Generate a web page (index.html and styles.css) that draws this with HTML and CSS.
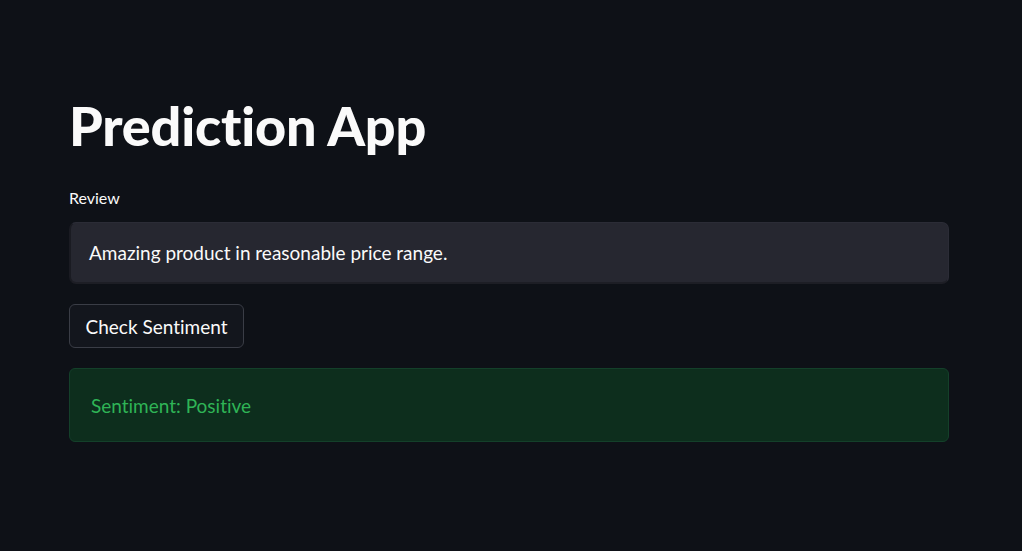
FILE: index.html
```html
<!DOCTYPE html>
<html>
<head>
<meta charset="utf-8">
<link rel="stylesheet" href="styles.css">
</head>
<body>
<main class="app">
  <h1 class="title">Prediction App</h1>
  <div class="field">
    <label class="label">Review</label>
    <div class="input">Amazing product in reasonable price range.</div>
  </div>
  <button class="btn">Check Sentiment</button>
  <div class="alert">Sentiment: Positive</div>
</main>
</body>
</html>
```
FILE: styles.css
```css
html, body {
  margin: 0;
  padding: 0;
  background: #0e1117;
  height: 100%;
}
body {
  font-family: Lato, "Noto Sans", sans-serif;
  font-variant-ligatures: none;
  color: #fafafa;
}
.app {
  width: 880px;
  padding: 94px 0 0 69px;
  display: flex;
  flex-direction: column;
  align-items: flex-start;
}
.title {
  margin: 0;
  font-size: 54px;
  font-weight: 900;
  line-height: 64px;
  letter-spacing: -0.2px;
  color: #fafafa;
}
.field {
  margin-top: 30px;
  width: 880px;
  display: flex;
  flex-direction: column;
}
.label {
  font-size: 16px;
  line-height: 20px;
  color: #fafafa;
  margin-bottom: 14px;
}
.input {
  box-sizing: border-box;
  height: 62px;
  background: #262730;
  border: 1px solid #2b2c36;
  border-left: 2px solid #1a1b22;
  border-bottom: 2px solid #1d1e25;
  border-radius: 7px;
  padding: 0 18px;
  display: flex;
  align-items: center;
  font-size: 19px;
  color: #fafafa;
}
.btn {
  margin-top: 20px;
  box-sizing: border-box;
  height: 44px;
  width: 175px;
  padding: 0;
  background: #13161d;
  border: 1px solid #3a3d46;
  border-radius: 6px;
  color: #fafafa;
  font-family: Lato, "Noto Sans", sans-serif;
  font-variant-ligatures: none;
  font-size: 19px;
}
.alert {
  margin-top: 20px;
  box-sizing: border-box;
  width: 880px;
  height: 74px;
  background: #0d2e1d;
  border: 1px solid #14402a;
  border-radius: 6px;
  padding: 0 21px;
  display: flex;
  align-items: center;
  font-size: 19px;
  color: #2fb456;
}
```
